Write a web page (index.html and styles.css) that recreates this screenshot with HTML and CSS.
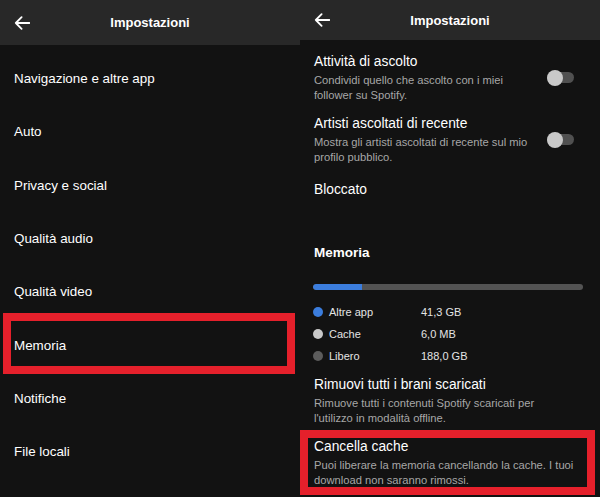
FILE: index.html
```html
<!DOCTYPE html>
<html lang="it">
<head>
<meta charset="utf-8">
<title>Impostazioni</title>
<link rel="stylesheet" href="styles.css">
</head>
<body>
<div class="screen">
  <section class="panel">
    <header class="topbar topbar-tall">
      <svg class="back" viewBox="0 0 16 14" aria-hidden="true"><path d="M15.5 7H1.8M7.6 1.2L1.8 7l5.8 5.8" fill="none" stroke="#fff" stroke-width="1.8" stroke-linecap="round" stroke-linejoin="round"/></svg>
      <h1 class="title">Impostazioni</h1>
    </header>
    <ul class="menu">
      <li>Navigazione e altre app</li>
      <li>Auto</li>
      <li>Privacy e social</li>
      <li>Qualità audio</li>
      <li>Qualità video</li>
      <li>Memoria</li>
      <li>Notifiche</li>
      <li>File locali</li>
    </ul>
    <div class="mark mark-left"></div>
  </section>

  <section class="panel">
    <header class="topbar topbar-short">
      <svg class="back" viewBox="0 0 16 14" aria-hidden="true"><path d="M15.5 7H1.8M7.6 1.2L1.8 7l5.8 5.8" fill="none" stroke="#fff" stroke-width="1.8" stroke-linecap="round" stroke-linejoin="round"/></svg>
      <h1 class="title">Impostazioni</h1>
    </header>
    <div class="settings">
      <div class="setting">
        <div class="setting-text">
          <div class="setting-title">Attività di ascolto</div>
          <div class="setting-desc">Condividi quello che ascolto con i miei<br>follower su Spotify.</div>
        </div>
        <div class="toggle"><span class="knob"></span></div>
      </div>
      <div class="setting gap-13">
        <div class="setting-text">
          <div class="setting-title">Artisti ascoltati di recente</div>
          <div class="setting-desc">Mostra gli artisti ascoltati di recente sul mio<br>profilo pubblico.</div>
        </div>
        <div class="toggle"><span class="knob"></span></div>
      </div>
      <div class="setting gap-17">
        <div class="setting-title">Bloccato</div>
      </div>

      <h2 class="section-title">Memoria</h2>
      <div class="bar"><div class="bar-fill" style="width: 49px"></div></div>
      <div class="legend">
        <div class="legend-row"><span class="dot dot-blue"></span><span>Altre app</span><span>41,3 GB</span></div>
        <div class="legend-row"><span class="dot dot-light"></span><span>Cache</span><span>6,0 MB</span></div>
        <div class="legend-row"><span class="dot dot-dark"></span><span>Libero</span><span>188,0 GB</span></div>
      </div>

      <div class="setting gap-9">
        <div class="setting-text">
          <div class="setting-title">Rimuovi tutti i brani scaricati</div>
          <div class="setting-desc">Rimuove tutti i contenuti Spotify scaricati per<br>l'utilizzo in modalità offline.</div>
        </div>
      </div>
      <div class="setting gap-13">
        <div class="setting-text">
          <div class="setting-title">Cancella cache</div>
          <div class="setting-desc">Puoi liberare la memoria cancellando la cache. I tuoi<br>download non saranno rimossi.</div>
        </div>
      </div>
    </div>
    <div class="mark mark-right"></div>
  </section>
</div>
</body>
</html>
```
FILE: styles.css
```css
html, body {
  margin: 0;
  padding: 0;
  background: #121212;
}

.screen {
  display: flex;
  width: 600px;
  height: 497px;
  overflow: hidden;
  font-family: "Liberation Sans", Arial, sans-serif;
  color: #ffffff;
}

.panel {
  position: relative;
  width: 300px;
  height: 497px;
  flex: none;
  background: #121212;
  overflow: hidden;
}

.topbar {
  display: grid;
  grid-template-columns: 1fr auto 1fr;
  align-items: center;
  background: #282828;
  padding: 0 14px;
}

.topbar-tall { height: 45px; }
.topbar-short { height: 40px; }

.back {
  width: 16px;
  height: 14px;
  display: block;
}

.title {
  margin: 0;
  font-size: 13px;
  font-weight: bold;
  color: #ffffff;
}

.menu {
  list-style: none;
  margin: 0;
  padding: 7px 14px 0;
}

.menu li {
  height: 53.33px;
  display: flex;
  align-items: center;
  font-size: 13.4px;
  color: #ffffff;
}

.settings {
  padding: 13px 17px 0 14px;
}

.setting {
  display: flex;
  align-items: center;
  justify-content: space-between;
}

.gap-9 { margin-top: 9px; }
.gap-13 { margin-top: 13px; }
.gap-17 { margin-top: 17px; }

.setting-title {
  font-size: 13.8px;
  line-height: 18px;
  color: #ffffff;
}

.setting-desc {
  margin-top: 2px;
  font-size: 11.2px;
  line-height: 14.5px;
  color: #a7a7a7;
  white-space: nowrap;
}

.toggle {
  width: 27px;
  height: 11px;
  margin-right: 9px;
  border-radius: 6px;
  background: #505050;
  display: flex;
  align-items: center;
  flex: none;
}

.knob {
  width: 16px;
  height: 16px;
  border-radius: 50%;
  background: #c9c9c9;
  flex: none;
}

.section-title {
  margin: 45px 0 0;
  font-size: 13.5px;
  line-height: 18px;
  font-weight: bold;
  color: #ffffff;
}

.bar {
  margin: 22px 0 0 -1px;
  width: 270px;
  height: 6px;
  border-radius: 3px;
  background: #535353;
  overflow: hidden;
}

.bar-fill {
  height: 100%;
  background: #3b7ddd;
  border-radius: 3px 0 0 3px;
}

.legend {
  margin: 11px 0 0 -1px;
}

.legend-row {
  display: grid;
  grid-template-columns: 16px 92px auto;
  align-items: center;
  height: 22px;
  font-size: 11px;
  color: #e4e4e4;
}

.dot {
  width: 10px;
  height: 10px;
  border-radius: 50%;
}

.dot-blue { background: #3b7ddd; }
.dot-light { background: #c8c8c8; }
.dot-dark { background: #5c5c5c; }

.mark {
  position: absolute;
  box-sizing: border-box;
  border: 8px solid #e5202b;
}

.mark-left {
  left: 3px;
  top: 313px;
  width: 292px;
  height: 61px;
}

.mark-right {
  left: 0;
  top: 430px;
  width: 295px;
  height: 65px;
}
```
